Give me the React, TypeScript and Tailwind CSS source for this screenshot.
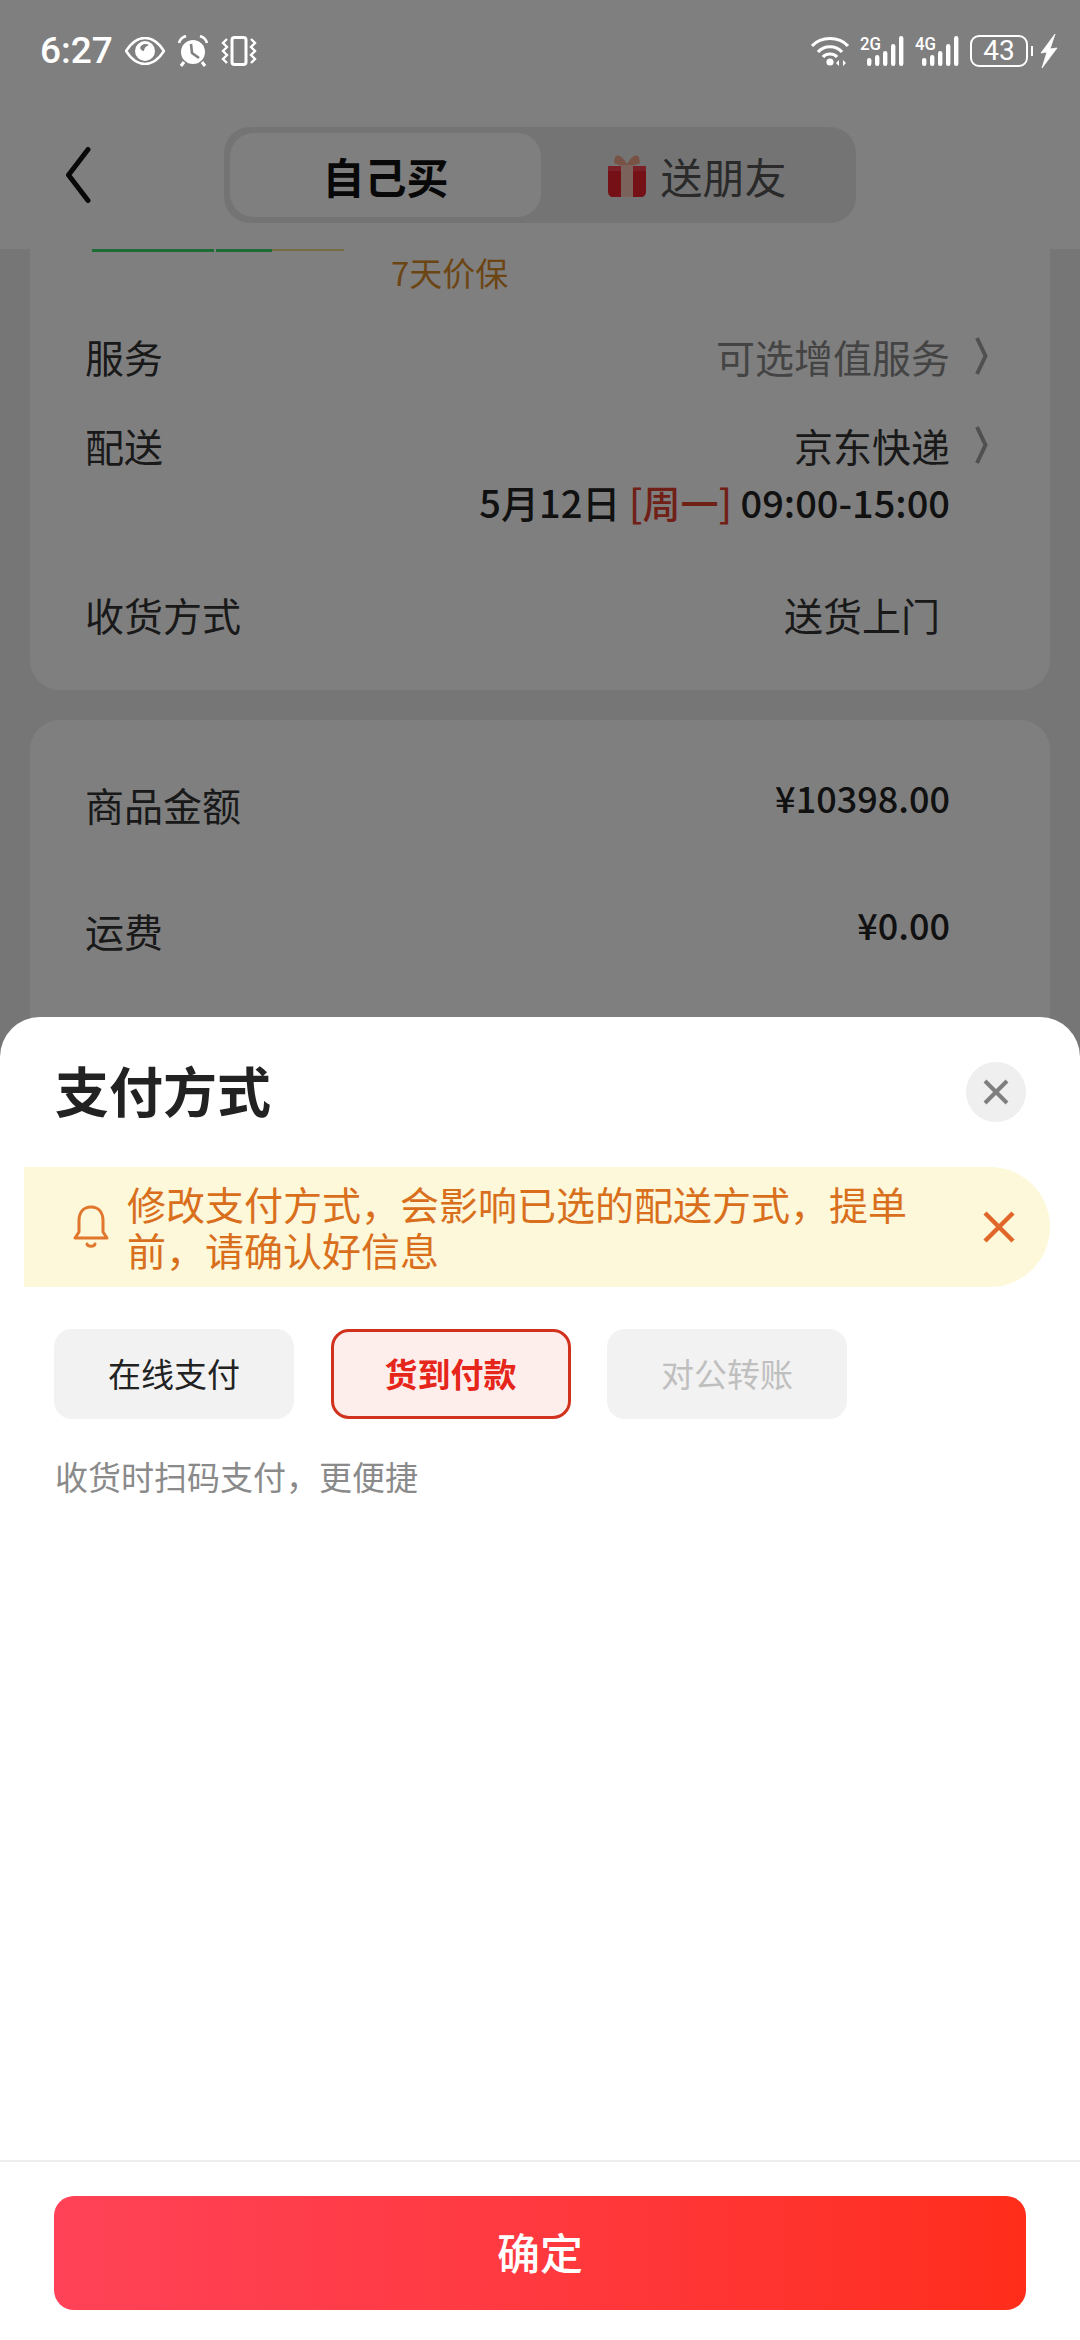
const CJK = { fontFamily: '"Noto Sans CJK SC", "Noto Sans", sans-serif' };

function Chevron() {
  return (
    <svg viewBox="0 0 13 40" className="w-[13px] h-[40px] ml-[25px]" fill="none">
      <path d="M2 2 L10.5 20 L2 38" stroke="#a0a0a0" strokeWidth="4" />
    </svg>
  );
}

function Eye() {
  return (
    <svg viewBox="0 0 40 28" className="w-[40px] h-[28px] ml-[12px]">
      <path d="M1 14 C8 3 14 1 20 1 C26 1 32 3 39 14 C32 25 26 27 20 27 C14 27 8 25 1 14 Z" fill="none" stroke="white" strokeWidth="2.6" />
      <circle cx="20" cy="14" r="10" fill="white" />
      <path d="M15 11 C16 7 21 6 24 8 C21 9 19 11 19 14 C17 14 16 13 15 11 Z" fill="#808080" />
    </svg>
  );
}

function Alarm() {
  return (
    <svg viewBox="0 0 32 32" className="w-[32px] h-[32px] ml-[12px]">
      <circle cx="16" cy="17" r="12" fill="white" />
      <path d="M2 8 C3 4 6 2 9 1" stroke="white" strokeWidth="2.6" fill="none" />
      <path d="M30 8 C29 4 26 2 23 1" stroke="white" strokeWidth="2.6" fill="none" />
      <path d="M7 27 L4 31 M25 27 L28 31" stroke="white" strokeWidth="3" />
      <path d="M14 9 L15 18 L22 23" stroke="#808080" strokeWidth="2.6" fill="none" />
    </svg>
  );
}

function Vibrate() {
  return (
    <svg viewBox="0 0 36 30" className="w-[36px] h-[30px] ml-[12px]" fill="none" stroke="white">
      <rect x="11" y="1.5" width="14" height="27" rx="2.5" strokeWidth="3" />
      <path d="M6 3 L2 7 L6 11 L2 15 L6 19 L2 23 L6 27" strokeWidth="2.4" />
      <path d="M30 3 L34 7 L30 11 L34 15 L30 19 L34 23 L30 27" strokeWidth="2.4" />
    </svg>
  );
}

function Wifi() {
  return (
    <svg viewBox="0 0 38 30" className="w-[38px] h-[30px]" fill="none" stroke="white" strokeWidth="3.2">
      <path d="M1 10 C10 0 28 0 37 10" />
      <path d="M7 16 C13 9 25 9 31 16" />
      <path d="M12 21 C15 17 23 17 26 21" />
      <circle cx="19" cy="26" r="3.6" fill="white" stroke="none" />
      <path d="M28 24 L25 27 L28 30 Z M32 24 L35 27 L32 30 Z" fill="white" stroke="none" />
    </svg>
  );
}

function Signal({ label }: { label: string }) {
  return (
    <svg viewBox="0 -5 44 35" className="w-[44px] h-[35px] -mt-[5px]">
      <text x="0" y="14" fill="white" fontSize="18" fontWeight="500" fontFamily="Roboto, sans-serif" textLength="21" lengthAdjust="spacingAndGlyphs">
        {label}
      </text>
      <rect x="7" y="22" width="4.4" height="8" rx="2.2" fill="white" />
      <rect x="15" y="19" width="4.4" height="11" rx="2.2" fill="white" />
      <rect x="23" y="15" width="4.4" height="15" rx="2.2" fill="white" />
      <rect x="31" y="8" width="4.4" height="22" rx="2.2" fill="white" />
      <rect x="39" y="0" width="4.4" height="30" rx="2.2" fill="white" />
    </svg>
  );
}

function Bolt() {
  return (
    <svg viewBox="0 0 18 34" className="w-[18px] h-[34px] ml-[7px]">
      <path d="M15 0 L1 19 L7 18 L2 34 L17 14 L10 15 Z" fill="white" stroke="white" strokeWidth="0.8" />
    </svg>
  );
}

function Gift() {
  return (
    <svg viewBox="0 0 38 43" className="w-[38px] h-[43px]">
      <path d="M19 10 C14 1 9 0 7 3 L6 9 C10 11 14 12 19 12 C24 12 28 11 32 9 L31 3 C29 0 24 1 19 10 Z" fill="#f3a48c" />
      <path d="M0 12 H38 V37 C38 41 36 43 33 43 H5 C2 43 0 41 0 37 Z" fill="#e8202d" />
      <rect x="0" y="12" width="38" height="5" fill="#f5404c" />
      <rect x="13" y="11" width="12" height="32" fill="#f6c4b4" />
    </svg>
  );
}

function Bell() {
  return (
    <svg viewBox="0 0 36 44" className="w-[36px] h-[44px] shrink-0" fill="none" stroke="#e0772c" strokeWidth="3">
      <path d="M18 2 C10 2 6 8 6 16 V27 L2 33 H34 L30 27 V16 C30 8 26 2 18 2 Z" strokeLinejoin="round" />
      <path d="M14 39 C15 42 21 42 22 39" strokeLinecap="round" />
    </svg>
  );
}

function Row({ label, children, className }: { label: string; children: React.ReactNode; className: string }) {
  return (
    <div className={`flex justify-between items-center h-[46px] text-[39px] leading-[46px] text-[#333333] ${className}`}>
      <span>{label}</span>
      {children}
    </div>
  );
}

export default function App() {
  return (
    <div style={CJK} className="relative w-[1080px] h-[2340px] overflow-hidden bg-[#ececec] flex flex-col">
      <div className="bg-[#ffffff] h-[249px] shrink-0">
        <div className="relative z-20 flex justify-between items-center h-[102px] pl-[40px] pr-[22px] text-white">
          <div className="flex items-center">
            <span className="text-[37px] leading-[44px] font-medium" style={{ fontFamily: 'Roboto, sans-serif' }}>6:27</span>
            <Eye />
            <Alarm />
            <Vibrate />
          </div>
          <div className="flex items-center">
            <Wifi />
            <div className="ml-[11px]"><Signal label="2G" /></div>
            <div className="ml-[11px]"><Signal label="4G" /></div>
            <div className="ml-[11px] w-[58px] h-[32px] rounded-[9px] border-2 border-white flex items-center justify-center text-[28px] leading-none" style={{ fontFamily: 'Roboto, sans-serif' }}>
              43
            </div>
            <div className="ml-[3px] w-[2px] h-[10px] bg-white" />
            <Bolt />
          </div>
        </div>
        <div className="flex items-center h-[96px] mt-[25px] pl-[65px]">
          <svg viewBox="0 0 26 56" className="w-[26px] h-[56px]" fill="none">
            <path d="M23 2.5 L3.5 28 L23 53.5" stroke="#111111" strokeWidth="5" strokeLinecap="round" strokeLinejoin="round" />
          </svg>
          <div className="ml-[133px] w-[632px] h-[96px] rounded-[26px] bg-[#e9e9e9] flex items-center p-[6px]">
            <div className="w-[311px] h-[84px] rounded-[24px] bg-white flex items-center justify-center text-[42px] font-bold text-[#111111]">
              自己买
            </div>
            <div className="flex-1 flex items-center justify-center gap-[14px] pl-[4px] text-[42px] text-[#555555]">
              <Gift />
              <span>送朋友</span>
            </div>
          </div>
        </div>
      </div>

      <div className="mx-[30px] bg-white rounded-b-[30px] pl-[55px] pb-[53px] shrink-0">
        <div className="ml-[7px] w-[252px] h-[3px] flex">
          <div className="w-[122px] bg-[#3ad66a]" />
          <div className="w-[2px]" />
          <div className="w-[56px] bg-[#3ad66a]" />
          <div className="flex-1 h-[2px] bg-[#e8d884]" />
        </div>
        <div className="mt-[2px] ml-[306px] h-[36px] text-[33px] leading-[36px] text-[#d98a2b]">7天价保</div>
        <Row label="服务" className="mt-[43px] pr-[62px]">
          <div className="flex items-center text-[#888888]">
            可选增值服务
            <Chevron />
          </div>
        </Row>
        <Row label="配送" className="mt-[43px] pr-[62px]">
          <div className="flex items-center">
            京东快递
            <Chevron />
          </div>
        </Row>
        <div className="mt-[10px] h-[46px] pr-[100px] flex justify-end items-center text-[38px] font-medium text-[#222222] whitespace-pre">
          5月12日 <span className="text-[#e1402f]">[周一]</span> 09:00-15:00
        </div>
        <Row label="收货方式" className="mt-[67px] pr-[110px]">
          <span>送货上门</span>
        </Row>
      </div>

      <div className="mx-[30px] mt-[30px] bg-white rounded-t-[30px] pl-[55px] pr-[100px] flex-1">
        <Row label="商品金额" className="mt-[61px]">
          <span className="-mt-[15px] text-[36px] font-medium text-[#222222]">¥10398.00</span>
        </Row>
        <Row label="运费" className="mt-[80px]">
          <span className="-mt-[12px] text-[36px] font-medium text-[#222222]">¥0.00</span>
        </Row>
      </div>

      <div className="absolute inset-0 z-10 bg-black/50" />

      <div className="absolute z-10 left-0 right-0 top-[1017px] bottom-0 bg-white rounded-t-[40px] flex flex-col">
        <div className="flex justify-between items-center h-[108px] pt-[44px] pl-[55px] pr-[54px]">
          <h2 className="-mt-[6px] text-[54px] leading-[64px] font-bold text-[#222222]">支付方式</h2>
          <button className="-mt-[2px] w-[60px] h-[60px] rounded-full bg-[#efefef] flex items-center justify-center">
            <svg viewBox="0 0 26 26" className="w-[26px] h-[26px]" fill="none">
              <path d="M2 2 L24 24 M24 2 L2 24" stroke="#7f7f7f" strokeWidth="4" />
            </svg>
          </button>
        </div>

        <div className="mt-[42px] ml-[24px] mr-[30px] h-[120px] rounded-r-[60px] bg-[#fcf8d9] flex items-center pl-[49px]">
          <Bell />
          <p className="ml-[18px] -mt-[3px] w-[790px] text-[39px] leading-[46px] text-[#d96f1c]">
            修改支付方式，会影响已选的配送方式，提单前，请确认好信息
          </p>
          <svg viewBox="0 0 32 32" className="w-[32px] h-[32px] ml-[66px]" fill="none">
            <path d="M2 2 L30 30 M30 2 L2 30" stroke="#e0662a" strokeWidth="4.5" />
          </svg>
        </div>

        <div className="mt-[42px] ml-[54px] flex gap-[36.5px]">
          <button className="w-[240px] h-[90px] rounded-[18px] bg-[#f2f2f2] text-[33px] text-[#222222]">在线支付</button>
          <button className="w-[240px] h-[90px] rounded-[18px] border-[3px] border-[#d0321e] bg-[#fdeeec] text-[33px] font-bold text-[#e6261a]">货到付款</button>
          <button className="w-[240px] h-[90px] rounded-[18px] bg-[#f2f2f2] text-[33px] text-[#bfbfbf]">对公转账</button>
        </div>

        <p className="mt-[37px] ml-[55px] text-[33px] leading-[40px] text-[#8a8a8a]">收货时扫码支付，更便捷</p>

        <div className="flex-1" />

        <div className="border-t-2 border-[#eeeeee] pt-[34px] pb-[30px] px-[54px]">
          <button className="w-full h-[114px] pb-[3px] rounded-[20px] bg-gradient-to-r from-[#ff4257] to-[#ff2d19] text-[43px] font-medium text-white">
            确定
          </button>
        </div>
      </div>
    </div>
  );
}
